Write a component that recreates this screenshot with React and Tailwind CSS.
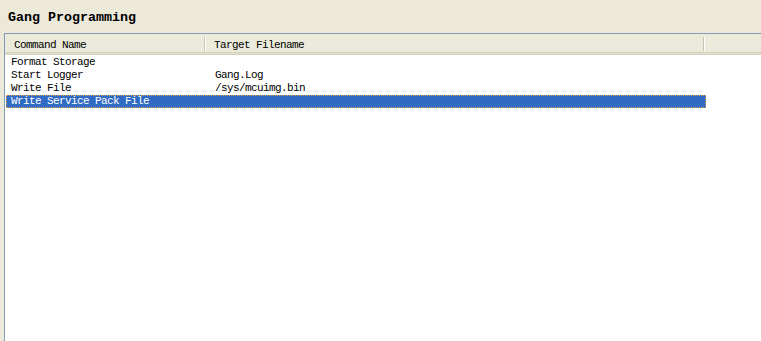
export default function App() {
  const mono = { fontFamily: '"Liberation Mono", "DejaVu Sans Mono", monospace' };
  const rows = [
    ["Format Storage", ""],
    ["Start Logger", "Gang.Log"],
    ["Write File", "/sys/mcuimg.bin"],
  ];
  return (
    <div className="w-[761px] h-[341px] bg-[#ECE9D8] overflow-hidden flex flex-col text-black" style={mono}>
      <div className="h-[33px] pl-[8px] pt-[9px] text-[13.33px] font-bold leading-[17px] tracking-[0px]">
        Gang Programming
      </div>
      <div className="ml-[4px] -mr-[4px] flex-1 -mb-[4px] border border-[#7F9DB9] bg-white flex flex-col">
        <div className="h-[21px] bg-[#EBEADB] flex border-b-[3px] border-b-[#D6D2C2] relative">
          <div className="w-[199px] pt-[4px] pl-[9px] text-[11px] tracking-[-0.6px] leading-[14px]">Command Name</div>
          <div className="flex mt-[3px] h-[14px]"><div className="w-[1px] h-full bg-[#C7C5B2]" /><div className="w-[1px] h-full bg-white" /></div>
          <div className="w-[497px] pt-[4px] pl-[8px] text-[11px] tracking-[-0.6px] leading-[14px]">Target Filename</div>
          <div className="flex mt-[3px] h-[14px]"><div className="w-[1px] h-full bg-[#C7C5B2]" /><div className="w-[1px] h-full bg-white" /></div>
          <div className="absolute left-0 right-0 -bottom-[2px] h-[1px] bg-[#E2DEC9]" />
        </div>
        <div className="pt-[1px] flex flex-col">
          {rows.map(([a, b]) => (
            <div key={a} className="h-[13px] flex text-[11px] tracking-[-0.6px] leading-[13px]">
              <div className="w-[200px] pl-[6px]">{a}</div>
              <div className="pl-[10px]">{b}</div>
            </div>
          ))}
          <div className="ml-[1px] w-[700px] h-[13px] flex text-[11px] tracking-[-0.6px] leading-[11px] bg-[#316AC5] text-white border border-dotted border-[#E0A040]">
            <div className="w-[199px] pl-[4px]">Write Service Pack File</div>
          </div>
        </div>
      </div>
    </div>
  );
}
